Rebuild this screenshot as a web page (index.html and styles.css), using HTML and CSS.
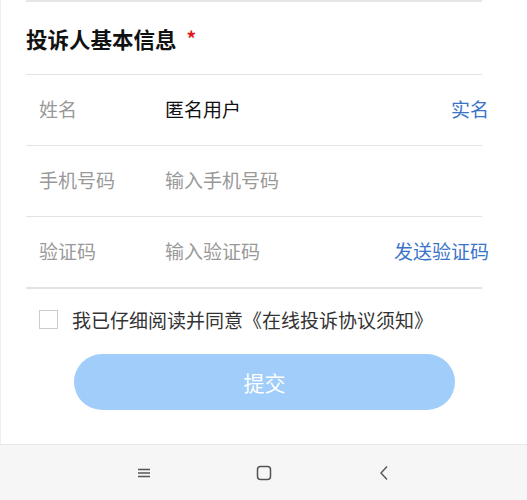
FILE: index.html
```html
<!DOCTYPE html>
<html lang="zh-CN">
<head>
  <meta charset="UTF-8">
  <meta name="viewport" content="width=device-width, initial-scale=1.0">
  <title>投诉人基本信息</title>
  <link rel="stylesheet" href="styles.css">
</head>
<body>
  <main class="page">
    <section class="info">
      <h2 class="info-title">投诉人基本信息<span class="required">*</span></h2>
      <div class="field">
        <span class="field-label">姓名</span>
        <span class="field-value">匿名用户</span>
        <a class="field-action">实名</a>
      </div>
      <div class="field">
        <span class="field-label">手机号码</span>
        <input class="field-input" type="tel" placeholder="输入手机号码">
      </div>
      <div class="field field-last">
        <span class="field-label">验证码</span>
        <input class="field-input" type="text" placeholder="输入验证码">
        <a class="field-action">发送验证码</a>
      </div>
    </section>

    <label class="agree">
      <span class="agree-box"></span>
      <span class="agree-text">我已仔细阅读并同意《在线投诉协议须知》</span>
    </label>

    <button class="submit" type="button">提交</button>
  </main>

  <nav class="navbar">
    <span class="nav-item">
      <svg width="14" height="10" viewBox="0 0 14 10">
        <path d="M1 1.5h12M1 5h12M1 8.5h12" stroke="#555" stroke-width="1.4" fill="none"/>
      </svg>
    </span>
    <span class="nav-item">
      <svg width="16" height="16" viewBox="0 0 16 16">
        <rect x="1.5" y="1.5" width="13" height="13" rx="3" stroke="#555" stroke-width="1.5" fill="none"/>
      </svg>
    </span>
    <span class="nav-item">
      <svg width="10" height="16" viewBox="0 0 10 16">
        <path d="M8 1.5L2 8l6 6.5" stroke="#555" stroke-width="1.4" fill="none"/>
      </svg>
    </span>
  </nav>
</body>
</html>
```

FILE: styles.css
```css
body {
  font-family: "Noto Sans CJK SC", "Noto Sans", sans-serif;
  margin: 0;
  padding: 0;
  background: #fff;
  color: #333;
  width: 527px;
  height: 500px;
  overflow: hidden;
  display: flex;
  flex-direction: column;
}
.page {
  flex: 1;
  border-left: 1px solid #eee;
}
.info {
  margin: 0 45px 0 25px;
  border-top: 2px solid #e6e6e6;
}
.info-title {
  margin: 0;
  height: 72px;
  display: flex;
  align-items: center;
  font-size: 21.5px;
  font-weight: bold;
  color: #111;
}
.required {
  color: #e4161c;
  font-size: 19px;
  margin-left: 10px;
  align-self: flex-start;
  margin-top: 22px;
}
.field {
  display: flex;
  align-items: center;
  height: 67px;
  padding: 0 0 3px 13px;
  border-top: 1px solid #e3e3e3;
  font-size: 19px;
}
.field-last {
  border-bottom: 2px solid #e3e3e3;
}
.field-label {
  width: 126px;
  color: #999;
}
.field-value {
  flex: 1;
  color: #111;
}
.field-input {
  flex: 1;
  min-width: 0;
  border: none;
  outline: none;
  padding: 0;
  font: inherit;
  color: #111;
  background: transparent;
}
.field-input::placeholder {
  color: #999;
}
.field-action {
  color: #3a74c9;
  margin-right: -7px;
}
.agree {
  display: flex;
  align-items: center;
  margin: 17px 0 0 38px;
  font-size: 19px;
  color: #333;
}
.agree-box {
  width: 17px;
  height: 17px;
  border: 1px solid #ccc;
  margin-right: 14px;
}
.submit {
  display: block;
  margin: 21px 0 0 73px;
  width: 381px;
  height: 56px;
  border: none;
  border-radius: 28px;
  background: #a0cdf9;
  color: #fff;
  font-family: inherit;
  font-size: 21px;
}
.navbar {
  height: 55px;
  background: #f6f6f6;
  border-top: 1px solid #e8e8e8;
  display: flex;
  align-items: center;
  justify-content: center;
}
.nav-item {
  width: 120px;
  display: flex;
  justify-content: center;
}
```
